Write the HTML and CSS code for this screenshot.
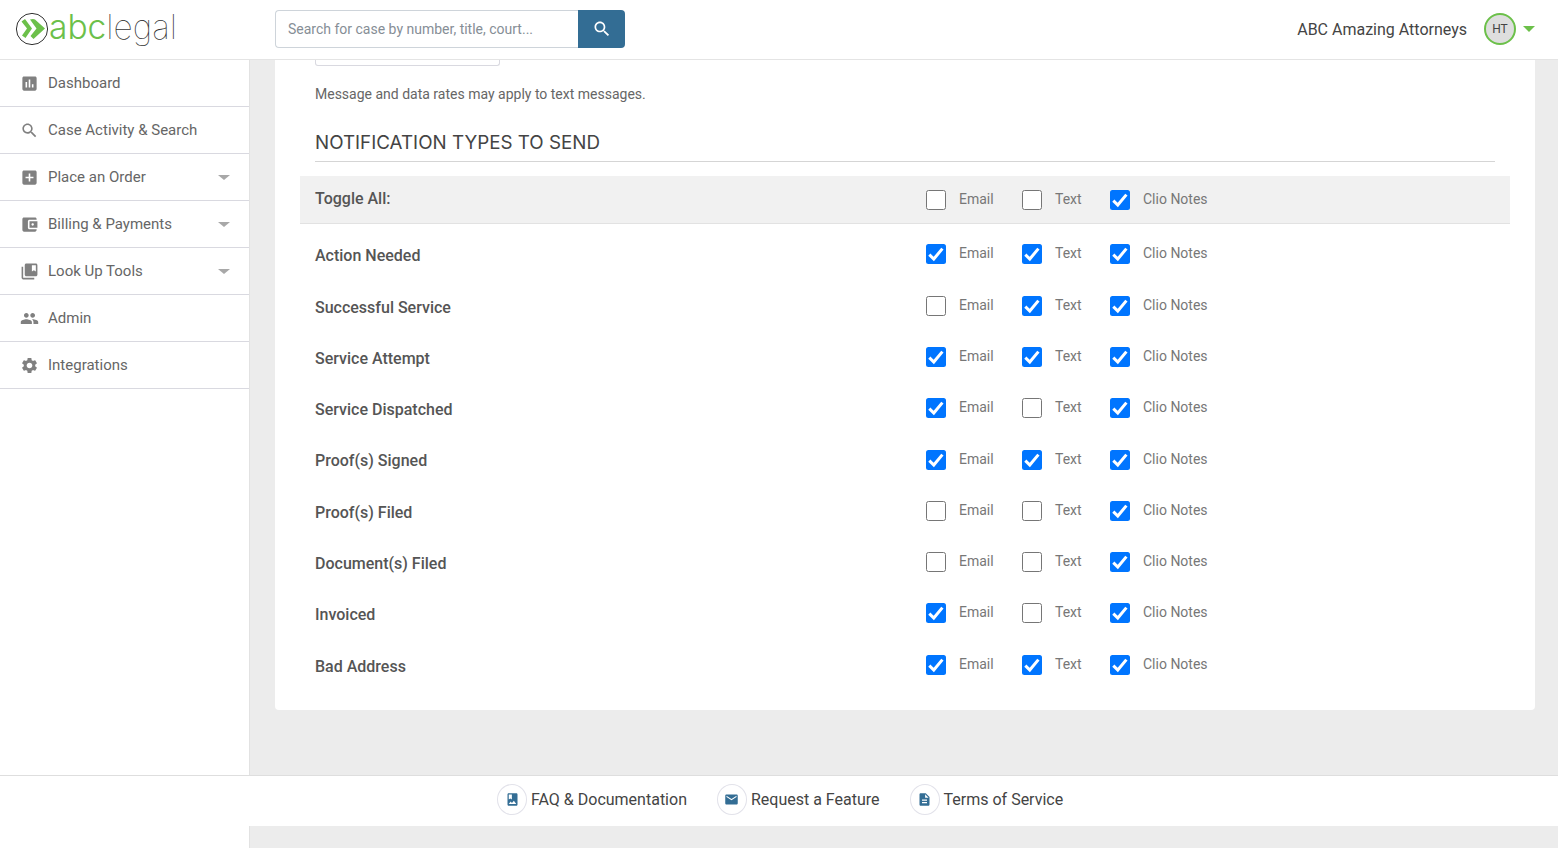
FILE: index.html
```html
<!DOCTYPE html>
<html lang="en">
<head>
  <meta charset="UTF-8">
  <meta name="viewport" content="width=device-width, initial-scale=1.0">
  <title>Notification settings</title>
  <link rel="stylesheet" href="styles.css">
</head>
<body>

  <div class="page">

    <header class="topbar">
      <div class="logo">
        <svg class="logo-mark" viewBox="0 0 34 34">
          <circle cx="17" cy="17" r="15.6" fill="none" stroke="#333" stroke-width="1"/>
          <path d="M6.5 9.5 L10 7 L17 16.5 L10.5 26 L7 23.5 L12 16.5 Z" fill="#6cc04a"/>
          <path d="M15 7.5 L18 7 L20 7.5 L30 16.5 L18.5 27 L15.5 24 L21.5 16.5 Z" fill="#6cc04a"/>
        </svg>
        <span class="logo-abc">abc</span><span class="logo-legal">legal</span>
      </div>

      <form class="search">
        <input class="search-input" type="text" placeholder="Search for case by number, title, court...">
        <button class="search-btn" type="button">
          <svg viewBox="0 0 24 24"><path d="M15.5 14h-.79l-.28-.27C15.41 12.59 16 11.11 16 9.5 16 5.91 13.09 3 9.5 3S3 5.91 3 9.5 5.91 16 9.5 16c1.61 0 3.09-.59 4.23-1.57l.27.28v.79l5 4.99L20.49 19l-4.99-5zm-6 0C7.01 14 5 11.99 5 9.5S7.01 5 9.5 5 14 7.01 14 9.5 11.99 14 9.5 14z"/></svg>
        </button>
      </form>

      <div class="account">
        <span class="account-name">ABC Amazing Attorneys</span>
        <span class="avatar">HT</span>
        <span class="account-caret"></span>
      </div>
    </header>

    <nav class="sidebar">
      <a class="nav-item">
        <svg class="nav-icon" viewBox="0 0 24 24"><path d="M19 3H5c-1.1 0-2 .9-2 2v14c0 1.1.9 2 2 2h14c1.1 0 2-.9 2-2V5c0-1.1-.9-2-2-2zM9 17H7v-7h2v7zm4 0h-2V7h2v10zm4 0h-2v-4h2v4z"/></svg>
        Dashboard
      </a>
      <a class="nav-item">
        <svg class="nav-icon" viewBox="0 0 24 24"><path d="M15.5 14h-.79l-.28-.27C15.41 12.59 16 11.11 16 9.5 16 5.91 13.09 3 9.5 3S3 5.91 3 9.5 5.91 16 9.5 16c1.61 0 3.09-.59 4.23-1.57l.27.28v.79l5 4.99L20.49 19l-4.99-5zm-6 0C7.01 14 5 11.99 5 9.5S7.01 5 9.5 5 14 7.01 14 9.5 11.99 14 9.5 14z"/></svg>
        Case Activity &amp; Search
      </a>
      <a class="nav-item has-menu">
        <svg class="nav-icon" viewBox="0 0 24 24"><path d="M19 3H5c-1.11 0-2 .9-2 2v14c0 1.1.89 2 2 2h14c1.1 0 2-.9 2-2V5c0-1.1-.9-2-2-2zm-2 10h-4v4h-2v-4H7v-2h4V7h2v4h4v2z"/></svg>
        Place an Order
      </a>
      <a class="nav-item has-menu">
        <svg class="nav-icon" viewBox="0 0 24 24"><path d="M21 18v1c0 1.1-.9 2-2 2H5c-1.11 0-2-.9-2-2V5c0-1.1.89-2 2-2h14c1.1 0 2 .9 2 2v1h-9c-1.11 0-2 .9-2 2v8c0 1.1.89 2 2 2h9zm-9-2h10V8H12v8zm4-2.5c-.83 0-1.5-.67-1.5-1.5s.67-1.5 1.5-1.5 1.5.67 1.5 1.5-.67 1.5-1.5 1.5z"/></svg>
        Billing &amp; Payments
      </a>
      <a class="nav-item has-menu">
        <svg class="nav-icon" viewBox="0 0 24 24"><path d="M4 6H2v14c0 1.1.9 2 2 2h14v-2H4V6zm16-4H8c-1.1 0-2 .9-2 2v12c0 1.1.9 2 2 2h12c1.1 0 2-.9 2-2V4c0-1.1-.9-2-2-2zm0 10l-2.5-1.5L15 12V4h5v8z"/></svg>
        Look Up Tools
      </a>
      <a class="nav-item">
        <svg class="nav-icon" viewBox="0 0 24 24"><path d="M16 11c1.66 0 2.99-1.34 2.99-3S17.66 5 16 5c-1.66 0-3 1.34-3 3s1.34 3 3 3zm-8 0c1.66 0 2.99-1.34 2.99-3S9.66 5 8 5C6.34 5 5 6.34 5 8s1.34 3 3 3zm0 2c-2.33 0-7 1.17-7 3.5V19h14v-2.5c0-2.33-4.67-3.5-7-3.5zm8 0c-.29 0-.62.02-.97.05 1.16.84 1.97 1.97 1.97 3.45V19h6v-2.5c0-2.33-4.67-3.5-7-3.5z"/></svg>
        Admin
      </a>
      <a class="nav-item">
        <svg class="nav-icon" viewBox="0 0 24 24"><path d="M19.14 12.94c.04-.3.06-.61.06-.94 0-.32-.02-.64-.07-.94l2.03-1.58c.18-.14.23-.41.12-.61l-1.92-3.32c-.12-.22-.37-.29-.59-.22l-2.39.96c-.5-.38-1.03-.7-1.62-.94l-.36-2.54c-.04-.24-.24-.41-.48-.41h-3.84c-.24 0-.43.17-.47.41l-.36 2.54c-.59.24-1.13.57-1.62.94l-2.39-.96c-.22-.08-.47 0-.59.22L2.74 8.87c-.12.21-.08.47.12.61l2.03 1.58c-.05.3-.09.63-.09.94s.02.64.07.94l-2.03 1.58c-.18.14-.23.41-.12.61l1.92 3.32c.12.22.37.29.59.22l2.39-.96c.5.38 1.03.7 1.62.94l.36 2.54c.05.24.24.41.48.41h3.84c.24 0 .44-.17.47-.41l.36-2.54c.59-.24 1.13-.56 1.62-.94l2.39.96c.22.08.47 0 .59-.22l1.92-3.32c.12-.22.07-.47-.12-.61l-2.01-1.58zM12 15.6c-1.98 0-3.6-1.62-3.6-3.6s1.62-3.6 3.6-3.6 3.6 1.62 3.6 3.6-1.62 3.6-3.6 3.6z"/></svg>
        Integrations
      </a>
    </nav>

    <main class="content">
      <section class="card">
        <div class="phone-stub"></div>
        <p class="note">Message and data rates may apply to text messages.</p>
        <h2 class="section-title">NOTIFICATION TYPES TO SEND</h2>

        <div class="type-row toggle-row">
          <span class="type-name">Toggle All:</span>
          <label class="opt opt-email"><input type="checkbox">Email</label>
          <label class="opt opt-text"><input type="checkbox">Text</label>
          <label class="opt"><input type="checkbox" checked>Clio Notes</label>
        </div>

        <div class="type-row">
          <span class="type-name">Action Needed</span>
          <label class="opt opt-email"><input type="checkbox" checked>Email</label>
          <label class="opt opt-text"><input type="checkbox" checked>Text</label>
          <label class="opt"><input type="checkbox" checked>Clio Notes</label>
        </div>
        <div class="type-row">
          <span class="type-name">Successful Service</span>
          <label class="opt opt-email"><input type="checkbox">Email</label>
          <label class="opt opt-text"><input type="checkbox" checked>Text</label>
          <label class="opt"><input type="checkbox" checked>Clio Notes</label>
        </div>
        <div class="type-row">
          <span class="type-name">Service Attempt</span>
          <label class="opt opt-email"><input type="checkbox" checked>Email</label>
          <label class="opt opt-text"><input type="checkbox" checked>Text</label>
          <label class="opt"><input type="checkbox" checked>Clio Notes</label>
        </div>
        <div class="type-row">
          <span class="type-name">Service Dispatched</span>
          <label class="opt opt-email"><input type="checkbox" checked>Email</label>
          <label class="opt opt-text"><input type="checkbox">Text</label>
          <label class="opt"><input type="checkbox" checked>Clio Notes</label>
        </div>
        <div class="type-row">
          <span class="type-name">Proof(s) Signed</span>
          <label class="opt opt-email"><input type="checkbox" checked>Email</label>
          <label class="opt opt-text"><input type="checkbox" checked>Text</label>
          <label class="opt"><input type="checkbox" checked>Clio Notes</label>
        </div>
        <div class="type-row">
          <span class="type-name">Proof(s) Filed</span>
          <label class="opt opt-email"><input type="checkbox">Email</label>
          <label class="opt opt-text"><input type="checkbox">Text</label>
          <label class="opt"><input type="checkbox" checked>Clio Notes</label>
        </div>
        <div class="type-row">
          <span class="type-name">Document(s) Filed</span>
          <label class="opt opt-email"><input type="checkbox">Email</label>
          <label class="opt opt-text"><input type="checkbox">Text</label>
          <label class="opt"><input type="checkbox" checked>Clio Notes</label>
        </div>
        <div class="type-row">
          <span class="type-name">Invoiced</span>
          <label class="opt opt-email"><input type="checkbox" checked>Email</label>
          <label class="opt opt-text"><input type="checkbox">Text</label>
          <label class="opt"><input type="checkbox" checked>Clio Notes</label>
        </div>
        <div class="type-row">
          <span class="type-name">Bad Address</span>
          <label class="opt opt-email"><input type="checkbox" checked>Email</label>
          <label class="opt opt-text"><input type="checkbox" checked>Text</label>
          <label class="opt"><input type="checkbox" checked>Clio Notes</label>
        </div>
      </section>
    </main>

    <footer class="footer">
      <a class="foot-link">
        <span class="foot-icon"><svg viewBox="0 0 24 24"><path d="M18 2H6c-1.1 0-2 .9-2 2v16c0 1.1.9 2 2 2h12c1.1 0 2-.9 2-2V4c0-1.1-.9-2-2-2zM6 4h5v8l-2.5-1.5L6 12V4zm0 15l3-3.86 2.14 2.58 3-3.86L18 19H6z"/></svg></span>
        FAQ &amp; Documentation
      </a>
      <a class="foot-link">
        <span class="foot-icon"><svg viewBox="0 0 24 24"><path d="M20 4H4c-1.1 0-1.99.9-1.99 2L2 18c0 1.1.9 2 2 2h16c1.1 0 2-.9 2-2V6c0-1.1-.9-2-2-2zm0 4l-8 5-8-5V6l8 5 8-5v2z"/></svg></span>
        Request a Feature
      </a>
      <a class="foot-link">
        <span class="foot-icon"><svg viewBox="0 0 24 24"><path d="M14 2H6c-1.1 0-1.99.9-1.99 2L4 20c0 1.1.89 2 1.99 2H18c1.1 0 2-.9 2-2V8l-6-6zm2 16H8v-2h8v2zm0-4H8v-2h8v2zm-3-5V3.5L18.5 9H13z"/></svg></span>
        Terms of Service
      </a>
    </footer>

    <div class="side-end"></div>

  </div>

</body>
</html>
```

FILE: styles.css
```css
* {
  box-sizing: border-box;
}

body {
  margin: 0;
  padding: 0;
  background-color: #ececec;
  color: #555;
  font-family: Roboto, "Liberation Sans", sans-serif;
  overflow: hidden;
}

.page {
  display: grid;
  grid-template-columns: 250px 1fr;
  grid-template-rows: 60px 715px 51px 22px;
  height: 848px;
}

/* top bar */
.topbar {
  grid-column: 1 / 3;
  display: flex;
  align-items: center;
  background-color: #fff;
  border-bottom: 1px solid #e4e4e4;
  padding: 0 23px 1px 0;
}

.logo {
  display: flex;
  align-items: center;
  width: 275px;
  padding-left: 15px;
  height: 58px;
}

.logo-mark {
  width: 34px;
  height: 34px;
  flex: none;
}

.logo-abc,
.logo-legal {
  font-family: Inter, sans-serif;
  font-size: 33.5px;
  letter-spacing: 0;
  line-height: 1;
  margin-top: -3px;
}

.logo-abc {
  margin-left: 0;
  color: #6cc04a;
  font-weight: 300;
}

.logo-legal {
  color: #333;
  font-weight: 100;
}

.search {
  display: flex;
  width: 350px;
  height: 38px;
}

.search-input {
  flex: 1;
  min-width: 0;
  height: 38px;
  padding: 0 12px;
  border: 1px solid #ced4da;
  border-right: 0;
  border-radius: 4px 0 0 4px;
  font-family: Roboto, sans-serif;
  font-size: 14px;
  outline: none;
}

.search-input::placeholder {
  color: #868e96;
  opacity: 1;
}

.search-btn {
  width: 47px;
  height: 38px;
  padding: 0;
  border: 0;
  border-radius: 0 4px 4px 0;
  background-color: #336d94;
  display: flex;
  align-items: center;
  justify-content: center;
}

.search-btn svg {
  width: 20px;
  height: 20px;
  fill: #fff;
}

.account {
  margin-left: auto;
  display: flex;
  align-items: center;
  height: 58px;
}

.account-name {
  font-size: 16px;
  color: #444;
}

.avatar {
  width: 32px;
  height: 32px;
  margin-left: 17px;
  border: 2px solid #6cc04a;
  border-radius: 50%;
  background-color: #dedede;
  color: #444;
  font-size: 12px;
  display: flex;
  align-items: center;
  justify-content: center;
}

.account-caret {
  margin-left: 7px;
  border-left: 6px solid transparent;
  border-right: 6px solid transparent;
  border-top: 6px solid #6cc04a;
}

/* sidebar */
.sidebar {
  background-color: #fff;
  border-right: 1px solid #e2e2e2;
}

.nav-item {
  position: relative;
  display: flex;
  align-items: center;
  height: 47px;
  padding-left: 20px;
  border-bottom: 1px solid #d9d9e0;
  color: #666;
  font-size: 15px;
}

.nav-icon {
  width: 19px;
  height: 19px;
  margin-right: 9px;
  fill: #808080;
  flex: none;
}

.has-menu::after {
  content: "";
  position: absolute;
  right: 19px;
  top: 21px;
  border-left: 6px solid transparent;
  border-right: 6px solid transparent;
  border-top: 5px solid #a8a8a8;
}

/* main card */
.content {
  padding: 0 23px 0 25px;
  overflow: hidden;
}

.card {
  height: 650px;
  padding: 0 40px;
  background-color: #fff;
  border-radius: 0 0 4px 4px;
}

.phone-stub {
  width: 185px;
  height: 6px;
  border: 1px solid #d9d9e0;
  border-top: 0;
  border-radius: 0 0 3px 3px;
}

.note {
  margin: 20px 0 0;
  font-size: 14px;
  line-height: 17px;
  color: #666;
}

.section-title {
  margin: 28px 0 14px;
  padding-bottom: 7px;
  border-bottom: 1px solid #d5d5d5;
  font-family: Inter, "Open Sans", sans-serif;
  font-size: 18.8px;
  line-height: 23px;
  font-weight: 400;
  color: #444;
}

.type-row {
  display: flex;
  align-items: center;
  height: 51.3px;
  padding-top: 1px;
}

.toggle-row {
  height: 48px;
  margin: 0 -15px 5.6px;
  padding: 0 15px 1px;
  background-color: #f1f1f1;
  border-bottom: 1px solid #e2e2e2;
}

.type-name {
  width: 611px;
  font-size: 16px;
  font-weight: 500;
  color: #555;
}

.toggle-row .type-name {
  margin-bottom: 2px;
}

.opt {
  display: flex;
  align-items: center;
  width: 152px;
  margin-bottom: 4.8px;
  color: #777;
  font-size: 14px;
}

.toggle-row .opt {
  margin-bottom: 0;
}

.opt-email {
  width: 96px;
}

.opt-text {
  width: 88px;
}

.opt input {
  appearance: none;
  width: 20px;
  height: 20px;
  margin: 2px 13px 0 0;
  flex: none;
  background-color: #fff;
  border: 1px solid #767676;
  border-radius: 2.5px;
}

.opt input:checked {
  border: 0;
  background-color: #0075ff;
  background-image: url("data:image/svg+xml,%3Csvg xmlns='http://www.w3.org/2000/svg' viewBox='0 0 20 20'%3E%3Cpath d='M3.3 10.6 L7.8 15 L16.4 4.6' fill='none' stroke='white' stroke-width='3'/%3E%3C/svg%3E");
}

/* footer */
.footer {
  grid-column: 1 / 3;
  display: flex;
  align-items: flex-start;
  gap: 30px;
  padding: 8px 0 0 497px;
  background-color: #fff;
  border-top: 1px solid #dedede;
}

.foot-link {
  display: flex;
  align-items: center;
  gap: 4px;
  height: 31px;
  font-size: 16px;
  color: #444;
}

.foot-icon {
  width: 30px;
  height: 31px;
  border: 1px solid #e2e2ea;
  border-radius: 50%;
  display: flex;
  align-items: center;
  justify-content: center;
}

.foot-icon svg {
  width: 15px;
  height: 15px;
  fill: #336d94;
}

.side-end {
  background-color: #fff;
  border-right: 1px solid #e2e2e2;
}
```
